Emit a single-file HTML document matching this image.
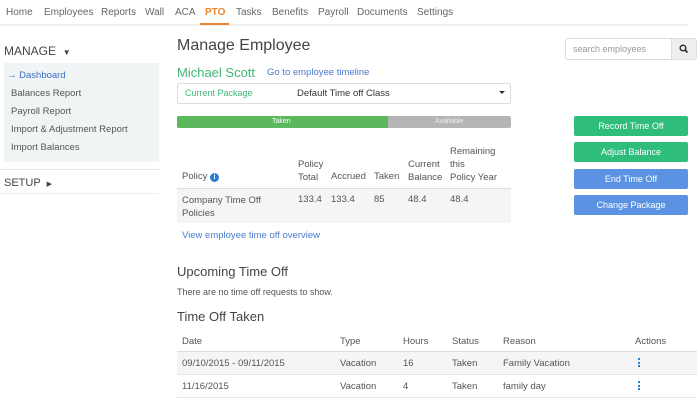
<!DOCTYPE html>
<html><head><style>
*{margin:0;padding:0;box-sizing:border-box}
body{width:700px;height:400px;overflow:hidden;background:#fff;font-family:"Liberation Sans",sans-serif;color:#444;position:relative;font-size:9.5px}
.a{position:absolute;white-space:nowrap}
.nav{font-size:10px;color:#666;top:7px}
.sb{font-size:9.5px;color:#555;left:11px}
.btn{position:absolute;left:574px;width:114px;height:20px;border-radius:2px;color:#fff;font-size:9px;text-align:center;line-height:20px}
.th{color:#555;font-size:9.5px}
.dots{position:absolute;width:2px}
.dots i{display:block;width:2px;height:2px;background:#2d7fd0;margin-bottom:1.5px}
</style></head><body>
<div class="a nav" style="left:6px">Home</div>
<div class="a nav" style="left:44px">Employees</div>
<div class="a nav" style="left:101px">Reports</div>
<div class="a nav" style="left:145px">Wall</div>
<div class="a nav" style="left:175px">ACA</div>
<div class="a nav" style="left:205px;color:#e8852d;font-weight:bold">PTO</div>
<div class="a nav" style="left:236px">Tasks</div>
<div class="a nav" style="left:272px">Benefits</div>
<div class="a nav" style="left:318px">Payroll</div>
<div class="a nav" style="left:357px">Documents</div>
<div class="a nav" style="left:417px">Settings</div>
<div class="a" style="left:0;top:24px;width:688px;height:2px;background:#eee"></div>
<div class="a" style="left:200px;top:23px;width:29px;height:2px;background:#e8852d"></div>

<div class="a" style="left:4px;top:44px;font-size:12px;color:#444">MANAGE &nbsp;<span style="font-size:8px">▼</span></div>
<div class="a" style="left:4px;top:63px;width:155px;height:99px;background:#f1f4f5"></div>
<div class="a sb" style="left:7px;top:70px;color:#3a6fc4">→ Dashboard</div>
<div class="a sb" style="top:88px">Balances Report</div>
<div class="a sb" style="top:106px">Payroll Report</div>
<div class="a sb" style="top:124px">Import &amp; Adjustment Report</div>
<div class="a sb" style="top:142px">Import Balances</div>
<div class="a" style="left:0;top:169px;width:159px;height:1px;background:#e5e5e5"></div>
<div class="a" style="left:4px;top:177px;font-size:11px;color:#444">SETUP &nbsp;<span style="font-size:7px">▶</span></div>
<div class="a" style="left:0;top:193px;width:159px;height:1px;background:#eee"></div>

<div class="a" style="left:177px;top:37px;font-size:16px;color:#444">Manage Employee</div>
<div class="a" style="left:565px;top:38px;width:132px;height:22px;border:1px solid #ddd;border-radius:3px"></div>
<div class="a" style="left:671px;top:39px;width:25px;height:20px;background:#eee;border-left:1px solid #ddd"></div>
<div class="a" style="left:573px;top:44px;font-size:9px;color:#999">search employees</div>
<svg class="a" style="left:679px;top:44px" width="10" height="10" viewBox="0 0 10 10"><circle cx="4" cy="4" r="2.8" fill="none" stroke="#333" stroke-width="1.5"/><path d="M6 6L8.5 8.5" stroke="#333" stroke-width="1.8"/></svg>

<div class="a" style="left:177px;top:65px;font-size:13px;color:#3fb878">Michael Scott</div>
<div class="a" style="left:267px;top:67px;font-size:9.5px;color:#4a7ad0">Go to employee timeline</div>
<div class="a" style="left:177px;top:83px;width:334px;height:21px;border:1px solid #ddd;border-radius:2px"></div>
<div class="a" style="left:185px;top:88px;font-size:9px;color:#3fb878">Current Package</div>
<div class="a" style="left:297px;top:88px;font-size:9.5px;color:#333">Default Time off Class</div>
<div class="a" style="left:499px;top:91px;width:0;height:0;border-left:3px solid transparent;border-right:3px solid transparent;border-top:3px solid #333"></div>

<div class="a" style="left:177px;top:116px;width:334px;height:12px;background:#b5b5b5;border-radius:2px"></div>
<div class="a" style="left:177px;top:116px;width:211px;height:12px;background:#5cb85c;border-radius:2px 0 0 2px"></div>
<div class="a" style="left:272px;top:118px;font-size:7px;color:#fff">Taken</div>
<div class="a" style="left:435px;top:118px;font-size:7px;color:#eee">Available</div>

<div class="a th" style="left:182px;top:171px">Policy <span style="display:inline-block;width:9px;height:9px;border-radius:50%;background:#2d7fd0;color:#fff;font-size:7px;text-align:center;line-height:9px;font-weight:bold">i</span></div>
<div class="a th" style="left:298px;top:158px;line-height:13px">Policy<br>Total</div>
<div class="a th" style="left:331px;top:171px">Accrued</div>
<div class="a th" style="left:374px;top:171px">Taken</div>
<div class="a th" style="left:408px;top:158px;line-height:13px">Current<br>Balance</div>
<div class="a th" style="left:450px;top:145px;line-height:13px">Remaining<br>this<br>Policy Year</div>
<div class="a" style="left:177px;top:188px;width:334px;height:35px;background:#f5f5f5;border-top:1px solid #ddd"></div>
<div class="a th" style="left:182px;top:194px;line-height:13px">Company Time Off<br>Policies</div>
<div class="a th" style="left:298px;top:194px">133.4</div>
<div class="a th" style="left:331px;top:194px">133.4</div>
<div class="a th" style="left:374px;top:194px">85</div>
<div class="a th" style="left:408px;top:194px">48.4</div>
<div class="a th" style="left:450px;top:194px">48.4</div>
<div class="a" style="left:182px;top:230px;font-size:9.5px;color:#4a7ad0">View employee time off overview</div>

<div class="btn" style="top:116px;background:#2fbd7c">Record Time Off</div>
<div class="btn" style="top:142px;background:#2fbd7c">Adjust Balance</div>
<div class="btn" style="top:169px;background:#5b93e2">End Time Off</div>
<div class="btn" style="top:195px;background:#5b93e2">Change Package</div>

<div class="a" style="left:177px;top:264px;font-size:13px;color:#444">Upcoming Time Off</div>
<div class="a" style="left:177px;top:287px;font-size:9px;color:#555">There are no time off requests to show.</div>
<div class="a" style="left:177px;top:309px;font-size:13px;color:#444">Time Off Taken</div>
<div class="a th" style="left:182px;top:336px">Date</div>
<div class="a th" style="left:340px;top:336px">Type</div>
<div class="a th" style="left:403px;top:336px">Hours</div>
<div class="a th" style="left:452px;top:336px">Status</div>
<div class="a th" style="left:503px;top:336px">Reason</div>
<div class="a th" style="left:635px;top:336px">Actions</div>
<div class="a" style="left:177px;top:351px;width:520px;height:24px;background:#f5f5f5;border-top:1px solid #ddd;border-bottom:1px solid #e5e5e5"></div>
<div class="a" style="left:177px;top:397px;width:520px;height:1px;background:#e5e5e5"></div>
<div class="a th" style="left:182px;top:358px">09/10/2015 - 09/11/2015</div>
<div class="a th" style="left:340px;top:358px">Vacation</div>
<div class="a th" style="left:403px;top:358px">16</div>
<div class="a th" style="left:452px;top:358px">Taken</div>
<div class="a th" style="left:503px;top:358px">Family Vacation</div>
<div class="dots" style="left:638px;top:358px"><i></i><i></i><i></i></div>
<div class="a th" style="left:182px;top:381px">11/16/2015</div>
<div class="a th" style="left:340px;top:381px">Vacation</div>
<div class="a th" style="left:403px;top:381px">4</div>
<div class="a th" style="left:452px;top:381px">Taken</div>
<div class="a th" style="left:503px;top:381px">family day</div>
<div class="dots" style="left:638px;top:381px"><i></i><i></i><i></i></div>
</body></html>
